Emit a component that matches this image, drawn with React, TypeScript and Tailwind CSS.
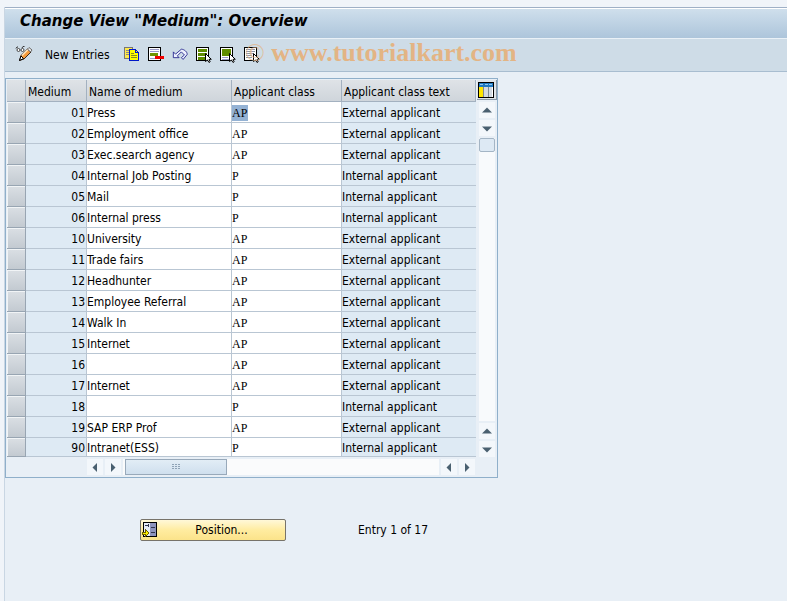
import React from 'react';

type Row = { medium: string; name: string; cls: string };

const rows: Row[] = [
  { medium: '01', name: 'Press', cls: 'AP' },
  { medium: '02', name: 'Employment office', cls: 'AP' },
  { medium: '03', name: 'Exec.search agency', cls: 'AP' },
  { medium: '04', name: 'Internal Job Posting', cls: 'P' },
  { medium: '05', name: 'Mail', cls: 'P' },
  { medium: '06', name: 'Internal press', cls: 'P' },
  { medium: '10', name: 'University', cls: 'AP' },
  { medium: '11', name: 'Trade fairs', cls: 'AP' },
  { medium: '12', name: 'Headhunter', cls: 'AP' },
  { medium: '13', name: 'Employee Referral', cls: 'AP' },
  { medium: '14', name: 'Walk In', cls: 'AP' },
  { medium: '15', name: 'Internet', cls: 'AP' },
  { medium: '16', name: '', cls: 'AP' },
  { medium: '17', name: 'Internet', cls: 'AP' },
  { medium: '18', name: '', cls: 'P' },
  { medium: '19', name: 'SAP ERP Prof', cls: 'AP' },
  { medium: '90', name: 'Intranet(ESS)', cls: 'P' },
];

const classText: Record<string, string> = {
  AP: 'External applicant',
  P: 'Internal applicant',
};

const Cursor = () => (
  <path d="M9.5 6.5v8l2-1.5 1.5 2.5 1.2-.8-1.2-2.4h2.3z" fill="#fff" stroke="#000" />
);

const ToggleIcon = () => (
  <svg width="18" height="18" viewBox="0 0 18 18" fill="none">
    <path d="M1 2.500l1-1.500h1M7 2l1-1.500h1.500" stroke="#333" />
    <circle cx="3.500" cy="4" r="1.500" fill="#fff" stroke="#444" />
    <circle cx="7.500" cy="4" r="1.500" fill="#fff" stroke="#444" />
    <path d="M4.500 14.500l1.500-5L12.500 3l3.500 3-7 7z" fill="#f59a3c" stroke="#3c2a1c" />
    <path d="M7 9.500L13 3.500" stroke="#ffe9c4" strokeWidth="1.500" />
    <path d="M12.500 3l1.500-1.500 3 2.500L15.500 6z" fill="#f2f2f2" stroke="#666" />
    <path d="M4.500 14.500L6 10l2.500 2.500z" fill="#fff" stroke="#000" />
  </svg>
);

const CopyIcon = () => (
  <svg width="16" height="16" viewBox="0 0 16 16" fill="none" shapeRendering="crispEdges">
    <path d="M.5.500h8v11h-8z" fill="#ffe94a" stroke="#777" />
    <path d="M2 3.500h3M2 5.500h3M2 7.500h3" stroke="#888" />
    <path d="M5.500 2.500h6l3 3v8h-9z" fill="#ffff00" stroke="#0018c8" />
    <path d="M11.500 2.500v3h3" stroke="#0018c8" />
    <path d="M7 6.500h3M7 8.500h6M7 10.500h6" stroke="#8a8a20" />
  </svg>
);

const DeleteIcon = () => (
  <svg width="16" height="16" viewBox="0 0 16 16" fill="none" shapeRendering="crispEdges">
    <path d="M.5.500h12v13h-12z" fill="#fff" stroke="#000" />
    <path d="M2 2.500h9M2 4.500h9M2 11.500h5" stroke="#9a9ac8" />
    <path d="M2 6h8v3H2z" fill="#6f9400" />
    <path d="M7 9h9v3H7z" fill="#f00000" />
  </svg>
);

const UndoIcon = () => (
  <svg width="18" height="16" viewBox="0 0 18 16" fill="none">
    <path
      d="M1.500 4.500V11H8l-2-2 4.500-4.500L14 8l-3.500 3 2 2L17 7.500C17.500 4.500 13.500 1.500 10.500 1.500L4 7z"
      fill="#eef2ff"
      stroke="#24248c"
    />
  </svg>
);

const SelectAllIcon = () => (
  <svg width="16" height="16" viewBox="0 0 16 16" fill="none">
    <g shapeRendering="crispEdges">
      <path d="M.5.500h12v13H.5z" fill="#fff" stroke="#000" />
      <path d="M2 2h9v3H2zM2 6h9v3H2zM2 10h7v3H2z" fill="#5f8c00" />
    </g>
    <Cursor />
  </svg>
);

const SelectBlockIcon = () => (
  <svg width="16" height="16" viewBox="0 0 16 16" fill="none">
    <g shapeRendering="crispEdges">
      <path d="M.5.500h12v13H.5z" fill="#fff" stroke="#000" />
      <path d="M2 2h9v7H2z" fill="#5f8c00" />
      <path d="M2 10.500h6M2 12.500h7" stroke="#9a9ac8" />
    </g>
    <Cursor />
  </svg>
);

const DeselectIcon = () => (
  <svg width="16" height="16" viewBox="0 0 16 16" fill="none">
    <g shapeRendering="crispEdges">
      <path d="M.5.500h12v13H.5z" fill="#fff" stroke="#000" />
      <path d="M2 2.500h9M2 4.500h9M2 6.500h7M2 8.500h6M2 10.500h6" stroke="#8a96a6" />
    </g>
    <Cursor />
  </svg>
);

const ConfigIcon = () => (
  <svg width="16" height="16" viewBox="0 0 16 16" fill="none" shapeRendering="crispEdges">
    <path d="M.5.500h15v15H.5z" fill="#fff" stroke="#000" />
    <path d="M1 1h14v4H1z" fill="#1f78c0" />
    <path d="M1 5h4v10H1z" fill="#ffe600" />
    <path d="M6 5h4v10H6zM11 5h3v10h-3z" fill="#d3dae2" />
    <path d="M5 5h1v10H5zM10 5h1v10h-1z" fill="#7c8894" />
    <path d="M2 2.500h3M7 2.500h3M11 2.500h3" stroke="#8fc8f0" />
  </svg>
);

const PositionIcon = () => (
  <svg width="16" height="16" viewBox="0 0 16 16" fill="none" shapeRendering="crispEdges">
    <path d="M1.500.5h13v14h-13z" fill="#e6ebf6" stroke="#000" />
    <path d="M8 1h6v13H8z" fill="#8d93bd" />
    <path d="M9 5.500h4M9 10.500h4M3 3.500h3M6 2v3" stroke="#30344c" />
    <path d="M0 10h3V7l4 4-4 4v-3H0z" fill="#fff000" stroke="#6b5c00" />
  </svg>
);

const tools = [
  { label: 'Copy As', icon: <CopyIcon /> },
  { label: 'Delete', icon: <DeleteIcon /> },
  { label: 'Undo Change', icon: <UndoIcon /> },
  { label: 'Select All', icon: <SelectAllIcon /> },
  { label: 'Select Block', icon: <SelectBlockIcon /> },
  { label: 'Deselect All', icon: <DeselectIcon /> },
];

const arrows = {
  up: 'M0 6.500l5-5 5 5z',
  down: 'M0 2.500l5 5 5-5z',
  left: 'M7 0L2.500 4.500 7 9z',
  right: 'M3 0l4.500 4.500L3 9z',
};

const ScrollButton = ({ dir }: { dir: keyof typeof arrows }) => (
  <button
    type="button"
    aria-label={`Scroll ${dir}`}
    className="flex size-4 shrink-0 items-center justify-center bg-[#f3f7fb]"
  >
    <svg width="10" height="9" viewBox="0 0 10 9" fill="#4a6070">
      <path d={arrows[dir]} />
    </svg>
  </button>
);

const headCell =
  'border-r border-b border-[#a3b1c0] bg-linear-to-b from-[#dfe3e7] to-[#cfd5db] px-0.5 pt-0.5 pb-0 text-left font-normal';
const cell = 'border-r border-b border-[#b9c6d3] px-0 pt-0.5 pb-0';

const MediumTable = () => (
  <table className="w-[469px] table-fixed border-separate border-spacing-0">
    <colgroup>
      <col className="w-[19px]" />
      <col className="w-[61px]" />
      <col className="w-[145px]" />
      <col className="w-[110px]" />
      <col className="w-[134px]" />
    </colgroup>
    <thead>
      <tr className="h-[22px]">
        <th className={headCell} aria-label="Select" />
        <th className={headCell}>Medium</th>
        <th className={headCell}>Name of medium</th>
        <th className={headCell}>Applicant class</th>
        <th className={headCell}>Applicant class text</th>
      </tr>
    </thead>
    <tbody>
      {rows.map((row, i) => (
        <tr key={row.medium} className="group h-[21px] last:h-[19px]">
          <td className="border-r border-b border-[#98a5b2] p-0">
            <button
              type="button"
              aria-label={`Select row ${row.medium}`}
              className="block h-5 w-full border-t border-l border-[#f1f4f6] bg-linear-to-b from-[#d9dee3] to-[#c3cad1] group-last:h-[18px]"
            />
          </td>
          <td className="border-r border-b border-[#b9c6d3] bg-[#deeaf4] pt-0.5 pr-px pb-0 pl-0 text-right">
            {row.medium}
          </td>
          <td className={`${cell} bg-white`}>
            <input
              aria-label={`Name of medium ${row.medium}`}
              defaultValue={row.name}
              className="block h-4 w-full bg-transparent outline-none"
            />
          </td>
          <td className={`${cell} bg-white`}>
            <input
              aria-label={`Applicant class ${row.medium}`}
              defaultValue={row.cls}
              className={`block h-4 w-4 font-['Liberation_Serif',serif] outline-none ${
                i === 0 ? 'bg-[#94b2d4]' : 'bg-transparent'
              }`}
            />
          </td>
          <td className="border-b border-[#b9c6d3] bg-[#deeaf4] px-0 pt-0.5 pb-0">{classText[row.cls]}</td>
        </tr>
      ))}
    </tbody>
  </table>
);

export default function App() {
  return (
    <div className="min-h-screen bg-[#f0f4f9] pt-[7px] pl-1 font-['DejaVu_Sans_Condensed','DejaVu_Sans',sans-serif] text-xs leading-4 text-black">
      <div className="min-h-[594px] border-l border-[#c9d6e3] bg-[#e8eff6]">
        <header className="border-t border-b border-t-[#9fb0c6] border-b-[#a8bdd0]">
          <h1 className="h-[31px] border-t border-b border-t-white border-b-[#eaf1f7] bg-linear-to-b from-[#cfdfec] to-[#adc5db] pl-[15px] font-['DejaVu_Sans',sans-serif] text-[15px] leading-6 font-bold italic">
            Change View "Medium": Overview
          </h1>
          <div className="relative flex h-8 items-center bg-[#cedce7] pl-2.5">
            <button type="button" aria-label="Display/Change">
              <ToggleIcon />
            </button>
            <button type="button" className="ml-3">
              New Entries
            </button>
            <div className="ml-3.5 flex gap-2">
              {tools.map((tool) => (
                <button key={tool.label} type="button" aria-label={tool.label} className="flex w-4 justify-center">
                  {tool.icon}
                </button>
              ))}
            </div>
            {/* watermark lies over the last tool button */}
            <div className="pointer-events-none absolute top-0 left-60 font-['Liberation_Serif',serif] text-[26px] leading-7 font-bold whitespace-nowrap text-[#e3b484]">
              <span className="font-normal opacity-70">©</span> www.tutorialkart.com
            </div>
          </div>
        </header>

        <main className="pt-1.5">
          <section className="w-fit border border-[#8fafca] pt-px pl-px">
            <div className="flex">
              <MediumTable />
              <div className="flex w-[21px] flex-col items-center gap-0.5">
                <button
                  type="button"
                  aria-label="Table settings"
                  className="flex size-5 items-center justify-center border-r border-b border-[#8a99a8] bg-[#dfe5ea]"
                >
                  <ConfigIcon />
                </button>
                <ScrollButton dir="up" />
                <ScrollButton dir="down" />
                <div className="w-4 flex-1 bg-[#f8fafc]">
                  <div className="h-3.5 w-full rounded-xs border border-[#a4b5c5] bg-[#dde9f4]" />
                </div>
                <ScrollButton dir="up" />
                <ScrollButton dir="down" />
              </div>
            </div>
            <div className="flex h-5 items-center gap-0.5 pr-[22px] pl-20">
              <ScrollButton dir="left" />
              <ScrollButton dir="right" />
              <div className="h-4 flex-1 bg-[#fafbfc] pl-0.5">
                <div className="flex h-4 w-[102px] items-center justify-center border border-[#98a9ba] bg-linear-to-b from-[#e2edf6] to-[#cfdfee]">
                  <svg width="9" height="6" viewBox="0 0 9 6" stroke="#8fa3b6" strokeDasharray="2 1" shapeRendering="crispEdges">
                    <path d="M0 .5h9M0 2.500h9M0 4.500h9" />
                  </svg>
                </div>
              </div>
              <ScrollButton dir="left" />
              <ScrollButton dir="right" />
            </div>
          </section>

          <div className="mt-[41px] flex items-center gap-[72px] pl-[135px]">
            <button
              type="button"
              className="flex h-[22px] w-[146px] items-center rounded-xs border border-[#77736a] bg-linear-to-b from-[#fff8d8] via-[#ffeca0] to-[#fbe38a] pl-px"
            >
              <PositionIcon />
              <span className="flex-1 text-center">Position...</span>
            </button>
            <span>Entry 1 of 17</span>
          </div>
        </main>
      </div>
    </div>
  );
}
